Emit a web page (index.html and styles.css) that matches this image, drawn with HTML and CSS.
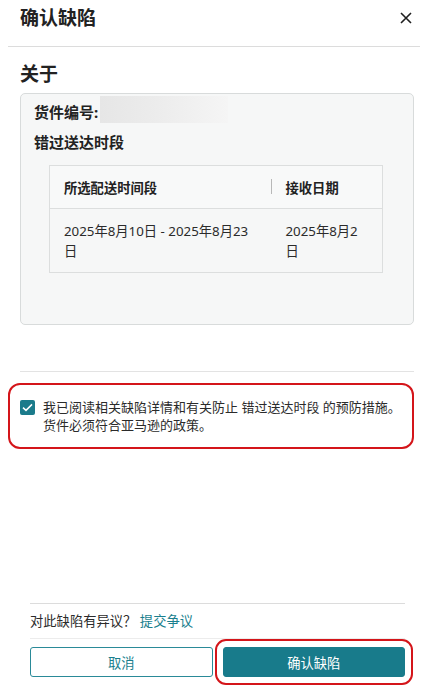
FILE: index.html
```html
<!DOCTYPE html>
<html lang="zh-CN">
<head>
    <meta charset="UTF-8">
    <title>确认缺陷</title>
    <link rel="stylesheet" href="styles.css">
</head>
<body>

<div class="modal">
    <div class="modal-header">
        <h1>确认缺陷</h1>
        <button class="cerrar" aria-label="关闭">
            <svg width="12" height="12" viewBox="0 0 12 12"><path d="M1 1L11 11M11 1L1 11" stroke="#1f1f1f" stroke-width="1.6" fill="none"/></svg>
        </button>
    </div>

    <div class="modal-body">
        <h2>关于</h2>

        <div class="caja">
            <div class="fila-envio">
                <span class="etiqueta">货件编号:</span>
                <span class="oculto"></span>
            </div>
            <h3>错过送达时段</h3>

            <table class="tabla">
                <colgroup>
                    <col class="col-rango">
                    <col class="col-fecha">
                </colgroup>
                <thead>
                    <tr>
                        <th>所选配送时间段</th>
                        <th class="con-linea">接收日期</th>
                    </tr>
                </thead>
                <tbody>
                    <tr>
                        <td>2025年8月10日 - 2025年8月23日</td>
                        <td>2025年8月2日</td>
                    </tr>
                </tbody>
            </table>
        </div>

        <hr class="separador">

        <label class="aviso">
            <span class="check">
                <svg width="11" height="9" viewBox="0 0 11 9"><path d="M1 4.6L4 7.4L10 1.4" stroke="#fff" stroke-width="1.5" fill="none"/></svg>
            </span>
            <span class="aviso-texto">我已阅读相关缺陷详情和有关防止 错过送达时段 的预防措施。货件必须符合亚马逊的政策。</span>
        </label>
    </div>

    <div class="modal-footer">
        <p class="disputa">对此缺陷有异议？ <a href="#">提交争议</a></p>
        <div class="botonera">
            <button class="btn btn-secundario">取消</button>
            <button class="btn btn-primario">确认缺陷</button>
        </div>
    </div>
</div>

</body>
</html>
```

FILE: styles.css
```css
body {
    margin: 0;
    font-family: "Noto Sans", "Noto Sans CJK SC", sans-serif;
    background: #fff;
    color: #2b2b2b;
}
.modal {
    width: 422px;
    height: 687px;
    display: flex;
    flex-direction: column;
}
.modal-header {
    margin: 0 2px 0 8px;
    height: 46px;
    border-bottom: 1px solid #dcdcdc;
    display: flex;
    align-items: center;
    justify-content: space-between;
    padding: 0 8px 0 12px;
}
.modal-header h1 {
    margin: 0;
    font-size: 19px;
    line-height: 24px;
    font-weight: bold;
    color: #222;
    position: relative;
    top: -5px;
}
.cerrar {
    border: none;
    background: none;
    padding: 0;
    width: 12px;
    height: 12px;
    cursor: pointer;
    position: relative;
    top: -5px;
}
.cerrar svg {
    display: block;
}
.modal-body {
    padding: 0 8px 0 20px;
    flex: 1;
}
.modal-body h2 {
    margin: 15px 0 7px;
    font-size: 19px;
    line-height: 24px;
    color: #222;
}
.caja {
    background: #f6f7f7;
    border: 1px solid #d8dbdb;
    border-radius: 5px;
    padding: 1px 13px 51px;
}
.fila-envio {
    display: flex;
    align-items: center;
    height: 28px;
}
.etiqueta {
    font-size: 15px;
    font-weight: bold;
    color: #222;
    position: relative;
    top: 2px;
}
.oculto {
    display: inline-block;
    width: 128px;
    height: 27px;
    margin-left: 2px;
    background: linear-gradient(90deg, #e6e6e6 0%, #ececec 45%, #f1f1f1 75%, #f5f5f5 100%);
}
.caja h3 {
    margin: 8px 0 0;
    font-size: 15px;
    line-height: 22px;
    color: #222;
}
.tabla {
    margin: 12px 17px 0 15px;
    width: 334px;
    border-collapse: collapse;
    table-layout: fixed;
    border: 1px solid #dcdede;
}
.col-rango {
    width: 221px;
}
.tabla th {
    background: #f8f9f9;
    text-align: left;
    font-size: 13.3px;
    font-weight: bold;
    color: #222;
    height: 42px;
    padding: 0 14px;
    border-bottom: 1px solid #dcdede;
}
.tabla th.con-linea {
    position: relative;
    padding-left: 15px;
}
.tabla th.con-linea::before {
    content: "";
    position: absolute;
    left: 0;
    top: 13px;
    width: 1px;
    height: 15px;
    background: #b8b8b8;
}
.tabla td {
    font-size: 13.3px;
    line-height: 20px;
    color: #2b2b2b;
    padding: 12px 12px 11px 14px;
    vertical-align: top;
}
.tabla td + td {
    padding: 12px 18px 11px 15px;
}
.separador {
    border: none;
    border-top: 1px solid #e3e3e3;
    margin: 46px 0 11px;
}
.aviso {
    display: flex;
    align-items: flex-start;
    gap: 8px;
    margin-left: -12px;
    border: 2px solid #d4151a;
    border-radius: 12px;
    padding: 13px 4px 13px 10px;
    font-size: 13px;
    line-height: 18px;
    color: #2b2b2b;
}
.check {
    flex: none;
    width: 15px;
    height: 15px;
    margin-top: 2px;
    background: #1b7b8b;
    border-radius: 2px;
    display: flex;
    align-items: center;
    justify-content: center;
}
.modal-footer {
    padding: 0 17px 10px 30px;
}
.disputa {
    margin: 0;
    padding: 7px 0;
    border-top: 1px solid #dcdcdc;
    border-bottom: 1px solid #ececec;
    font-size: 13.3px;
    line-height: 20px;
    color: #2b2b2b;
}
.disputa a {
    color: #1a7f8e;
    text-decoration: none;
}
.botonera {
    display: flex;
    gap: 10px;
    margin-top: 8px;
}
.btn {
    flex: 1;
    height: 30px;
    border-radius: 3px;
    font-family: inherit;
    font-size: 13.3px;
    cursor: pointer;
}
.btn-secundario {
    background: #fff;
    border: 1px solid #2a8a98;
    color: #1a7f8e;
}
.btn-primario {
    background: #187b8b;
    border: 1px solid #187b8b;
    color: #fff;
    outline: 2px solid #d4151a;
    outline-offset: 6px;
}
```
